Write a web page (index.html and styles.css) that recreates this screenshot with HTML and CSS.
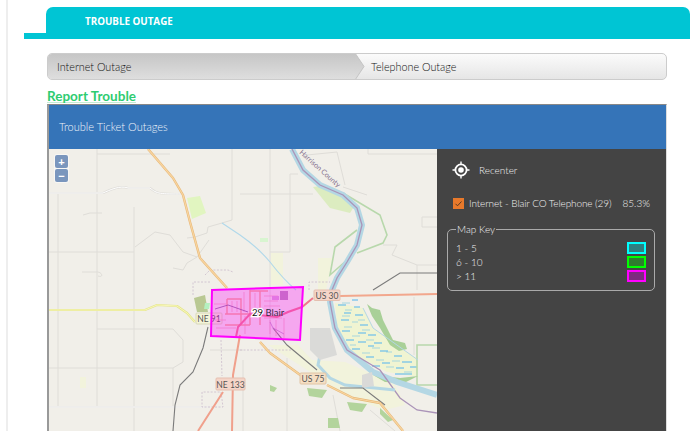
FILE: index.html
```html
<!DOCTYPE html>
<html lang="en">

<head>
    <meta charset="UTF-8">
    <title>Trouble Outage</title>
    <link rel="stylesheet" href="styles.css">
</head>

<body>
    <div class="page">
        <div class="header">
            <div class="header-foot"></div>
            <div class="header-tab">TROUBLE OUTAGE</div>
        </div>

        <div class="content">
            <div class="steps">
                <div class="step step-active">Internet Outage</div>
                <svg class="step-arrow" viewBox="0 0 10 27" width="10" height="27">
                    <defs>
                        <linearGradient id="arrowFill" x1="0" y1="0" x2="0" y2="1">
                            <stop offset="0" stop-color="#c6c6c6" />
                            <stop offset="1" stop-color="#dedede" />
                        </linearGradient>
                    </defs>
                    <path d="M0 0 L9 13.5 L0 27 Z" fill="url(#arrowFill)" />
                    <path d="M0 0 L9 13.5 L0 27" fill="none" stroke="#c4c4c4" />
                </svg>
                <div class="step">Telephone Outage</div>
            </div>

            <h2 class="report-title"><span>Report Trouble</span></h2>

            <div class="panel">
                <div class="panel-head">Trouble Ticket Outages</div>
                <div class="panel-body">
                    <div class="map">
                        <svg class="map-svg" viewBox="49 149 388 282" width="388" height="282">
                            <rect x="49" y="149" width="388" height="282" fill="#f1efe9" />

                            <!-- farm land and parks -->
                            <path d="M187 198 L200 196 L206 213 L192 219 Z" fill="#e1f5c0" />
                            <path d="M260 238 H268 V242 H260 Z" fill="#d8f5d0" />
                            <g fill="#f2f3dc">
                                <path d="M271 253 H283 V285 H271 Z" />
                                <path d="M318 258 H332 L329 276 L326 290 H318 Z" />
                                <path d="M80 377 H86 V388 H80 Z" />
                                <path d="M298 345 L312 360 L345 362 L375 375 L395 385 L405 405 L385 410 L350 398 L315 375 L268 345 Z" />
                            </g>
                            <path d="M313 187 L330 208 L350 213 L355 205 L343 195 L320 186 Z" fill="#dcecc0" />

                            <!-- minor roads -->
                            <g fill="none" stroke="#dfddd8" stroke-width="1">
                                <path d="M97 149 V407" />
                                <path d="M58 193 V407" />
                                <path d="M134 207 V431" />
                                <path d="M49 252 H134" />
                                <path d="M97 154 H170" />
                                <path d="M270 149 V340" />
                                <path d="M290 174 V252 H270 M290 174 H298" />
                                <path d="M240 194 H313" />
                                <path d="M232 149 V220 L222 223 L208 227 L207 233 L195 237 L187 238" />
                                <path d="M49 368 H173 V407" />
                                <path d="M97 329 H173 L183 340 V362 L173 368" />
                                <path d="M135 247 L155 232 L170 235 L183 252 L197 257 L209 240" />
                                <path d="M197 257 L187 263 L183 270 L173 268" />
                                <path d="M83 215 L90 213 H102" />
                                <path d="M82 272 H98 C103 273 103 278 98 276" />
                                <path d="M307 155 L337 152 L345 185 M343 187 L367 195" />
                                <path d="M368 149 V154 H437" />
                                <path d="M422 217 H437 M422 217 V227 H437" />
                                <path d="M383 245 H397 L392 255 L417 265 H437 M417 265 V290" />
                                <path d="M243 350 H210 M243 360 V431 M287 358 V431" />
                                <path d="M333 395 L340 431 M370 410 L395 431" />
                                <path d="M414 297 V355" />
                            </g>

                            <!-- main roads with white casing -->
                            <g fill="none">
                                <path class="map-casing" d="M49 193 H103 C110 190 120 185 128 188 L150 188 C157 194 160 194 183 194" />
                                <path class="map-core" d="M49 193 H103 C110 190 120 185 128 188 L150 188 C157 194 160 194 183 194" />
                                <path class="map-casing" d="M49 407 H210" />
                                <path class="map-core" d="M49 407 H210" />
                            </g>

                            <!-- county lines -->
                            <g fill="none" stroke="#cbbccb" stroke-width="0.8" stroke-dasharray="2 1.5">
                                <path d="M210 282 H193 V295 M202 392 V407 H223 L221 392 Z" />
                                <path d="M205 275 L210 270 H228 L233 272" />
                                <path d="M309 290 V282 H330" />
                                <path d="M221 340 L222 376" />
                                <path d="M240 350 H292" />
                            </g>

                            <!-- sandbar and island -->
                            <path d="M335 303 L363 308 L373 328 L418 360 V377 L387 372 L350 352 L337 325 Z" fill="#f0f4d2" />
                            <g stroke="#a6d6de" stroke-width="1">
                                <path d="M342 303 H350 M345 310 H352 M342 316 H350 M358 320 H365" />
                                <path d="M352 322 H358 M344 327 H352 M362 330 H370 M352 336 H360" />
                                <path d="M366 340 H374 M350 345 H356 M372 348 H380 M362 353 H370" />
                                <path d="M386 352 H392 M376 360 H384 M392 361 H400 M386 367 H394 M404 372 H412" />
                            </g>
                            <g stroke="#52b4f0" stroke-width="1">
                                <path d="M352 300 H358 M338 305 H346 M354 307 H360 M344 313 H351 M355 315 H363" />
                                <path d="M341 320 H349 M360 325 H368 M342 331 H350 M358 333 H366" />
                                <path d="M368 335 H376 M346 340 H354 M358 342 H366 M374 343 H382" />
                                <path d="M352 349 H360 M368 346 H374 M380 351 H388 M366 357 H374 M394 356 H402" />
                                <path d="M382 363 H390 M402 362 H412 M372 366 H380 M396 368 H404 M410 367 H417 M395 374 H412" />
                            </g>

                            <!-- wetlands -->
                            <g fill="none" stroke="#b8d8ac" stroke-width="1.6">
                                <path d="M343 193 L380 215 L387 235 L383 243 L357 253" />
                                <path d="M357 230 L335 247 L330 275 L347 260" />
                                <path d="M437 345 H417 V385 H437" />
                            </g>
                            <path d="M367 304 L372 308 L380 310 L383 320 L393 340 L405 343 L407 349 L399 351 L390 345 L380 328 L372 316 Z" fill="#a9d098" />
                            <path d="M373 375 L400 378 L418 376 L404 383 L385 382 Z" fill="#a9d098" />

                            <!-- the river -->
                            <path d="M292 149 L303 170 L320 185 L343 195 L357 208 L362 225 L357 245 L347 262 L337 278 L332 290 L330 302 L335 328 L347 350 L373 372 L397 382 L437 395" fill="none" stroke="#b4d7e4" stroke-width="6" />
                            <path d="M292 149 L303 170 L320 185 L343 195 L357 208 L362 225 L357 245 L347 262 L337 278 L332 290 L330 302 L335 328 L347 350 L380 370 L400 398 L417 410 L437 413" fill="none" stroke="#ab94b8" stroke-width="1.3" />
                            <path d="M222 223 L240 235 C250 242 260 250 270 262 C280 275 290 285 296 290" fill="none" stroke="#b0d8ea" stroke-width="1.1" />
                            <path d="M320 355 L318 365 L330 378 L345 385 L395 390" fill="none" stroke="#b4d7e4" stroke-width="3" />
                            <path d="M363 308 L373 328 L418 360" fill="none" stroke="#b4d7e4" stroke-width="1" />

                            <!-- industrial areas -->
                            <path d="M310 328 H330 L337 355 L320 360 L310 350 Z" fill="#dadad8" />
                            <path d="M362 375 L372 372 L374 386 L362 388 Z" fill="#dadad8" />
                            <path d="M194 298 L205 295 L208 312 L197 312 Z" fill="#b9c893" />
                            <path d="M205 303 L210 303 L209 309 L204 309 Z" fill="#b4f0c0" />
                            <g fill="#b3d49c">
                                <path d="M307 388 L327 390 L322 398 L309 396 Z" />
                                <path d="M347 402 L367 404 L362 412 L350 410 Z" />
                                <path d="M328 418 L338 418 L340 428 L328 428 Z" />
                                <path d="M270 385 L277 388 L274 392 L270 391 Z" />
                                <path d="M380 408 L393 420 L388 422 L380 414 Z" />
                            </g>

                            <!-- railroad -->
                            <g fill="none" stroke="#7b7b7b" stroke-width="1.1">
                                <path d="M373 290 L400 273 L437 273" />
                                <path d="M208 327 L203 348 L193 372 L180 385 L175 405 L173 431" />
                                <path d="M273 328 L287 345 L317 370" />
                                <path d="M340 388 L363 388 L385 405" />
                            </g>

                            <!-- highways -->
                            <g fill="none" stroke-linejoin="round">
                                <path d="M148 149 L173 178 L183 195 L190 222 L200 258 L227 288" stroke="#e8b878" stroke-width="2.4" />
                                <path d="M148 149 L173 178 L183 195 L190 222 L200 258 L227 288" stroke="#f8d5a0" stroke-width="1.2" />
                                <path d="M260 342 L270 353 L303 377 M327 385 L353 398 L380 403 L403 431" stroke="#e8b878" stroke-width="2.4" />
                                <path d="M260 342 L270 353 L303 377 M327 385 L353 398 L380 403 L403 431" stroke="#f8d5a0" stroke-width="1.2" />
                                <path d="M49 310 H145 L157 305 L177 306 L187 313 L195 322" stroke="#e5e58e" stroke-width="2.2" />
                                <path d="M49 310 H145 L157 305 L177 306 L187 313 L195 322" stroke="#f8f8b8" stroke-width="1" />
                                <path d="M340 296 L437 294" stroke="#f2a78d" stroke-width="1.8" />
                                <path d="M240 335 L233 375 L232 431 M223 392 L198 431" stroke="#f0a08c" stroke-width="2" />
                            </g>

                            <g class="map-sign map-sign-state">
                                <rect x="196" y="313" width="26" height="11" rx="1" />
                                <text x="209" y="322">NE 91</text>
                            </g>

                            <!-- town under the outage area -->
                            <g fill="none" stroke="#f2a890" stroke-width="1.4">
                                <path d="M227 299 H241 V325 M227 299 V314 M225 314 H250 M225 325 H250" />
                                <path d="M250 291 H268 M250 290 V325 M260 291 V325" />
                            </g>
                            <g fill="none" stroke="#f09ab0" stroke-width="0.6">
                                <path d="M214 304 H226 M215 320 H226 M232 301 V312 M237 301 V312 M244 292 V312 M255 293 V312" />
                                <path d="M264 318 H282 M270 320 V334 M276 320 V336 M284 318 V338 M245 316 V334 M216 328 H236" />
                                <path d="M264 296 H278 M264 301 H278 M264 306 H280" />
                            </g>
                            <path d="M215 309 L228 305 L248 312" fill="none" stroke="#7a5a90" stroke-width="0.8" />
                            <path d="M284 334 L273 328 L270 322" fill="none" stroke="#b58ac0" stroke-width="0.8" />
                            <path d="M313 298 L302 307 L288 312 L277 317 L250 314 L238 327 L236 337" fill="none" stroke="#f0788c" stroke-width="2" />
                            <path d="M272 296 H279 V300 H272 Z" fill="#d9a8d8" />
                            <path d="M280 291 H288 V300 H280 Z" fill="#b890b8" />

                            <!-- outage area -->
                            <path d="M212 290 L303 287 L300 340 L211 336 Z" fill="#ff00ff" fill-opacity="0.3" stroke="#ff00ff" stroke-width="2" />
                            <text class="map-area-label" x="252" y="316"><tspan class="map-area-count">29</tspan> Blair</text>

                            <!-- road signs -->
                            <g class="map-sign map-sign-red">
                                <rect x="216" y="378" width="29" height="12" rx="1" />
                                <text x="230.500" y="388">NE 133</text>
                            </g>
                            <g class="map-sign map-sign-red">
                                <rect x="314" y="290" width="26" height="10.500" rx="1" />
                                <text x="327" y="299">US 30</text>
                            </g>
                            <g class="map-sign map-sign-orange">
                                <rect x="300" y="373" width="26" height="11" rx="1" />
                                <text x="313" y="382">US 75</text>
                            </g>

                            <text class="map-county" transform="translate(299 153) rotate(42)">Harrison County</text>
                        </svg>

                        <div class="zoom-control">
                            <button class="zoom-btn">+</button>
                            <button class="zoom-btn">&minus;</button>
                        </div>
                    </div>

                    <div class="side">
                        <div class="recenter">
                            <svg viewBox="0 0 18 18" width="18" height="18">
                                <circle cx="9" cy="9" r="5.600" fill="none" stroke="#fff" stroke-width="1.800" />
                                <circle cx="9" cy="9" r="2.800" fill="#fff" />
                                <path d="M9 0.500 V3 M9 15 V17.500 M0.500 9 H3 M15 9 H17.500" stroke="#fff" stroke-width="1.400" />
                            </svg>
                            <span>Recenter</span>
                        </div>

                        <div class="layer-row">
                            <span class="layer-check">
                                <svg viewBox="0 0 11 11" width="11" height="11">
                                    <path d="M2.500 5.800 L4.500 7.800 L8.500 3.500" fill="none" stroke="#5a3a20" stroke-width="1" />
                                </svg>
                            </span>
                            <span class="layer-name">Internet - Blair CO Telephone (29)</span>
                            <span class="layer-pct">85.3%</span>
                        </div>

                        <fieldset class="map-key">
                            <legend>Map Key</legend>
                            <div class="key-row">1 - 5 <span class="swatch swatch-low"></span></div>
                            <div class="key-row">6 - 10 <span class="swatch swatch-mid"></span></div>
                            <div class="key-row">&gt; 11 <span class="swatch swatch-high"></span></div>
                        </fieldset>
                    </div>
                </div>
            </div>
        </div>
    </div>
</body>

</html>
```

FILE: styles.css
```css
html,
body {
    margin: 0;
    height: 431px;
    overflow: hidden;
    background-color: #fff;
}

body {
    font-family: Lato, "Open Sans", sans-serif;
}

.page {
    margin-left: 6px;
    height: 431px;
    padding-top: 7px;
    box-sizing: border-box;
    border-left: 2px solid #eee;
}

.header {
    display: flex;
    align-items: flex-end;
    margin-left: 16px;
    margin-right: 3px;
}

.header-foot {
    width: 22px;
    height: 6px;
    background-color: #00c5d4;
}

.header-tab {
    flex: 1;
    height: 32px;
    padding: 8px 0 0 39px;
    box-sizing: border-box;
    background-color: #00c5d4;
    border-radius: 7px 7px 0 0;
    color: #fff;
    font-family: "Open Sans", sans-serif;
    font-size: 9.8px;
    font-weight: 700;
}

.content {
    margin: 14px 26px 0 39px;
}

.steps {
    display: flex;
    height: 27px;
    box-sizing: border-box;
    border: 1px solid #ccc;
    border-radius: 5px;
    overflow: hidden;
    background: linear-gradient(#fbfbfb, #e6e6e6);
    font-size: 10.800px;
    font-weight: 300;
    color: #111;
}

.step {
    display: flex;
    align-items: center;
    padding-left: 6px;
}

.step-active {
    width: 298px;
    padding-left: 9px;
    background: linear-gradient(#c6c6c6, #dedede);
}

.step-arrow {
    margin-top: -1px;
}

.report-title {
    margin: 10px 0 0;
    height: 13px;
    font-size: 13.500px;
    line-height: 12px;
    font-weight: 700;
    color: #2ecc71;
}

.report-title span {
    display: inline-block;
    border-bottom: 1px solid #c4ecd4;
}

.panel {
    margin-top: 1px;
    border-top: 1px solid #888;
    border-left: 2px solid #999;
    border-right: 1px solid #ddd;
}

.panel-head {
    height: 44px;
    padding: 15px 0 0 10px;
    box-sizing: border-box;
    background-color: #3574b8;
    color: #eef3f8;
    font-size: 11px;
    font-weight: 300;
}

.panel-body {
    display: flex;
    height: 290px;
}

.map {
    position: relative;
    width: 388px;
}

.map-svg {
    display: block;
}

.map-casing {
    stroke: #dedcd8;
    stroke-width: 2.2;
}

.map-core {
    stroke: #fff;
    stroke-width: 1;
}

.map-area-label {
    font-size: 9.500px;
    fill: #3a2a48;
}

.map-area-count {
    fill: #111;
    stroke: #fff;
    stroke-width: 2.500px;
    paint-order: stroke;
}

.map-county {
    font-size: 7.200px;
    fill: #85708e;
}

.map-sign rect {
    stroke-width: 1;
}

.map-sign text {
    font-size: 8.500px;
    text-anchor: middle;
    fill: #555;
}

.map-sign-state rect {
    fill: #f4f4d8;
    stroke: #d8d8b8;
}

.map-sign-red rect {
    fill: #f5d5c8;
    stroke: #e5bfb0;
}

.map-sign-orange rect {
    fill: #f5dfc4;
    stroke: #e0c4a4;
}

.zoom-control {
    position: absolute;
    left: 5px;
    top: 5px;
    display: flex;
    flex-direction: column;
    gap: 1px;
    padding: 1px;
    border-radius: 3px;
    background-color: rgba(255, 255, 255, 0.5);
}

.zoom-btn {
    display: block;
    width: 13px;
    height: 13px;
    padding: 0;
    border: none;
    border-radius: 2px;
    background-color: #7a96bd;
    color: #fff;
    font-family: "Liberation Sans", sans-serif;
    font-size: 11px;
    font-weight: 700;
    line-height: 12px;
}

.side {
    width: 229px;
    box-sizing: border-box;
    background-color: #444;
    color: #f2f2f2;
    font-size: 10px;
    font-weight: 300;
}

.recenter {
    display: flex;
    align-items: center;
    gap: 9px;
    margin: 12px 0 0 15px;
}

.layer-row {
    display: flex;
    align-items: center;
    margin: 18px 16px 0 16px;
    white-space: nowrap;
}

.layer-check {
    width: 11px;
    height: 11px;
    margin-right: 5px;
    background-color: #e8792b;
}

.layer-check svg {
    display: block;
}

.layer-name {
    letter-spacing: -0.1px;
}

.layer-pct {
    margin-left: auto;
}

.map-key {
    width: 208px;
    margin: 15px 0 0 10px;
    padding: 6px 8px 7px 8px;
    box-sizing: border-box;
    border: 1px solid #aaa;
    border-radius: 5px;
}

.map-key legend {
    padding: 0 1px;
    margin-left: 0;
    line-height: 11px;
}

.key-row {
    display: flex;
    justify-content: space-between;
    align-items: center;
    height: 14px;
}

.swatch {
    width: 19px;
    height: 12px;
    box-sizing: border-box;
    border: 2px solid;
}

.swatch-low {
    border-color: #0ff;
    background-color: #2f7f80;
}

.swatch-mid {
    border-color: #0f0;
    background-color: #2e7d2e;
}

.swatch-high {
    border-color: #f0f;
    background-color: #7d2a7f;
}
```
